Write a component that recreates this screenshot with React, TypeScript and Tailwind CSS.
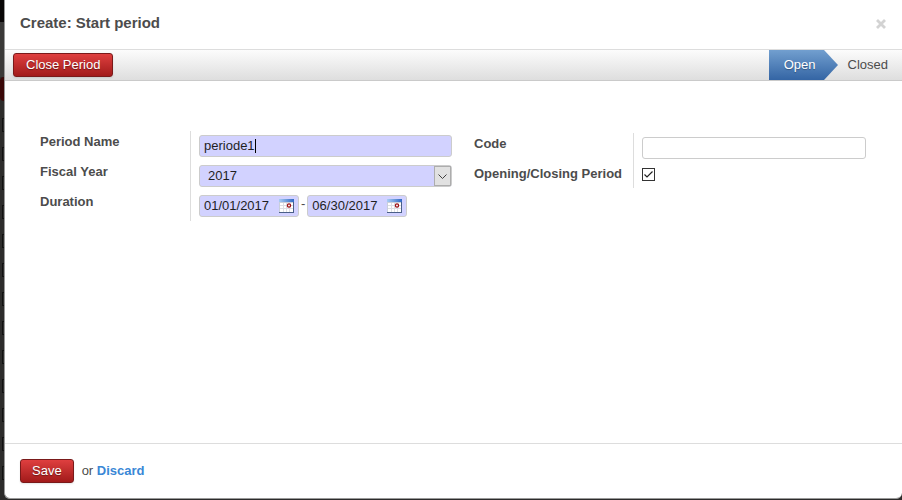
import { useState } from "react"

const redButton = "h-6 rounded-[3px] border border-[#7a1a1a] bg-linear-to-b from-[#df3f3f] to-[#a21a1a] leading-5 text-white text-shadow-[0_1px_1px_rgba(0,0,0,0.4)] shadow-[0_1px_2px_rgba(0,0,0,0.1)]"
const field = "flex h-[22px] items-center rounded-[3px] border border-[#cccccc]"

function Backdrop() {
    return (
        <div className="w-1 shrink-0 overflow-hidden bg-[#2d2c2b]" aria-hidden="true">
            <div className="h-[22px] bg-[#090606]"></div>
            <div className="h-[55px] bg-[#3a3938]"></div>
            <div className="h-6 rounded-l-sm bg-[#3a0808]"></div>
            <div className="flex flex-col gap-[15px] pt-[17px] pl-0.5">
                {Array.from({ length: 13 }, (_, i) => (
                    <div key={i} className="h-3.5 w-3 shrink-0 border border-[#111111]"></div>
                ))}
            </div>
        </div>
    )
}

function CalendarIcon() {
    return (
        <svg className="h-4 w-4" viewBox="0 0 16 16" shapeRendering="crispEdges" aria-hidden="true">
            <defs>
                <linearGradient id="calendar-top" x1="0" y1="0" x2="1" y2="0">
                    <stop offset="0" stopColor="#a9cdf5" />
                    <stop offset="1" stopColor="#2f68c4" />
                </linearGradient>
            </defs>
            <rect x="0" y="1" width="15" height="14" fill="#c9cfdb" />
            <rect x="1" y="5" width="13" height="9" fill="#ffffff" />
            <rect x="0" y="1" width="15" height="3" fill="url(#calendar-top)" />
            <path d="M1 7.5h13M1 10.5h13M4.5 5v9M7.5 5v9M10.5 5v9" stroke="#dcdee4" fill="none" />
            <path d="M14.5 4v11M0 14.5h15" stroke="#4a5f88" fill="none" />
            <rect x="8" y="5" width="4" height="4" fill="#ffffff" />
            <circle cx="10" cy="7.5" r="1.6" fill="#ffffff" stroke="#9c1016" strokeWidth="1.3" shapeRendering="auto" />
        </svg>
    )
}

function DateField({ label, value }: { label: string; value: string }) {
    const [date, setDate] = useState(value)
    return (
        <div className={`${field} w-[100px] bg-[#d2d2ff] pr-[3px] pl-1`}>
            <input aria-label={label} className="w-full min-w-0 flex-1 bg-transparent text-[#1f1f1f] outline-none" value={date} onChange={(e) => setDate(e.target.value)} />
            <button type="button" aria-label={`Pick ${label}`}><CalendarIcon /></button>
        </div>
    )
}

export default function App() {
    const [name, setName] = useState("periode1")
    const [checked, setChecked] = useState(true)

    return (
        <div className="flex h-screen overflow-hidden bg-[#2d2c2b] font-['Liberation_Sans',Arial,sans-serif] text-[13px] text-[#4c4c4c]">
            <Backdrop />
            <main className="mb-px flex min-w-0 flex-1 flex-col rounded-b-md border-b border-l border-[#999999] bg-white">
                <header className="flex h-[49px] items-center justify-between px-[15px] pb-0.5">
                    <h1 className="text-[15px] font-bold">Create: Start period</h1>
                    <button type="button" aria-label="Close">
                        <svg className="h-3 w-3" viewBox="0 0 12 12" fill="none" stroke="#d3d3d3" strokeWidth="2.8" aria-hidden="true">
                            <path d="M2 2l8 8M10 2l-8 8" />
                        </svg>
                    </button>
                </header>

                <div className="flex h-8 items-center justify-between border-y border-t-[#dddddd] border-b-[#cacaca] bg-linear-to-b from-[#fcfcfc] to-[#dedede] pl-2">
                    <button type="button" className={`${redButton} px-3`}>Close Period</button>
                    <ul className="flex h-full items-center">
                        <li className="flex h-full">
                            <span className="flex h-full items-center bg-linear-to-b from-[#729fcf] to-[#3465a4] pr-2 pl-[15px] text-white text-shadow-[0_1px_1px_rgba(0,0,0,0.3)]">Open</span>
                            <svg className="h-full w-3.5" viewBox="0 0 14 30" preserveAspectRatio="none" aria-hidden="true">
                                <defs>
                                    <linearGradient id="stage" x1="0" y1="0" x2="0" y2="1">
                                        <stop offset="0" stopColor="#729fcf" />
                                        <stop offset="1" stopColor="#3465a4" />
                                    </linearGradient>
                                </defs>
                                <path d="M0 0L14 15L0 30Z" fill="url(#stage)" />
                            </svg>
                        </li>
                        <li className="pr-3.5 pl-2.5">Closed</li>
                    </ul>
                </div>

                <form className="grid grid-cols-[412fr_392fr] items-start gap-[22px] pt-[50px] pr-9 pl-[35px]">
                    <div className="grid grid-cols-[150px_1fr]">
                        <div className="flex flex-col gap-2.5 pt-px font-bold leading-5">
                            <label htmlFor="name">Period Name</label>
                            <label htmlFor="year">Fiscal Year</label>
                            <span>Duration</span>
                        </div>
                        <div className="flex flex-col gap-2 border-l border-[#dddddd] py-1 pl-2">
                            <div className={`${field} bg-[#d2d2ff] px-1`}>
                                <input id="name" className="field-sizing-content max-w-full bg-transparent text-[#1f1f1f] outline-none" value={name} onChange={(e) => setName(e.target.value)} />
                                <span className="h-3.5 w-px bg-black"></span>
                            </div>
                            <div className={`${field} relative bg-[#d2d2ff]`}>
                                <select id="year" className="h-full w-full appearance-none bg-transparent pl-2 text-[#1f1f1f] outline-none">
                                    <option>2017</option>
                                </select>
                                <span className="pointer-events-none absolute inset-y-0 right-0 flex w-[17px] items-center justify-center border border-[#adadad] bg-[#e1e1e1]">
                                    <svg className="h-[5px] w-[9px]" viewBox="0 0 9 5" fill="none" stroke="#404040" aria-hidden="true">
                                        <path d="M0.5 0.5l4 4l4-4" />
                                    </svg>
                                </span>
                            </div>
                            <div className="flex h-[22px] items-center gap-0.5">
                                <DateField label="start date" value="01/01/2017" />
                                <span className="pb-1">-</span>
                                <DateField label="end date" value="06/30/2017" />
                            </div>
                        </div>
                    </div>

                    <div className="mt-0.5 grid grid-cols-[159px_1fr]">
                        <div className="flex flex-col gap-2.5 pt-px font-bold leading-5">
                            <label htmlFor="code">Code</label>
                            <label htmlFor="opening">Opening/Closing Period</label>
                        </div>
                        <div className="flex flex-col gap-[9px] border-l border-[#dddddd] pt-1 pb-[7px] pl-2">
                            <input id="code" className={`${field} w-full px-1 outline-none`} />
                            <div className="relative h-[13px] w-[13px]">
                                <input id="opening" type="checkbox" className="block h-[13px] w-[13px] appearance-none border border-[#333333] bg-white" checked={checked} onChange={(e) => setChecked(e.target.checked)} />
                                {checked && (
                                    <svg className="pointer-events-none absolute inset-0" viewBox="0 0 13 13" fill="none" stroke="#222222" strokeWidth="1.2" aria-hidden="true">
                                        <path d="M2.5 6.5l2.5 2.5l5.5-5.5" />
                                    </svg>
                                )}
                            </div>
                        </div>
                    </div>
                </form>

                <footer className="mt-auto flex h-[55px] items-center border-t border-[#dddddd] px-[15px]">
                    <button type="button" className={`${redButton} px-[11px]`}>Save</button>
                    <span className="pl-2">or <a href="#" className="font-bold text-[#3a87d6]">Discard</a></span>
                </footer>
            </main>
        </div>
    )
}
